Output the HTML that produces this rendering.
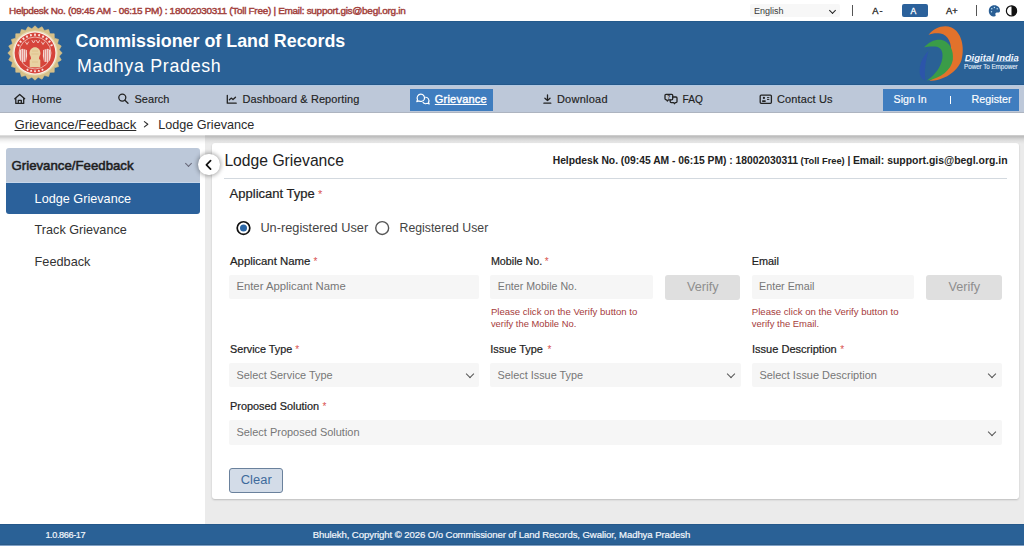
<!DOCTYPE html>
<html lang="en">
<head>
<meta charset="utf-8">
<title>Lodge Grievance - Commissioner of Land Records, Madhya Pradesh</title>
<style>
html,body{margin:0;padding:0;}
body{width:1024px;height:546px;overflow:hidden;position:relative;background:#ebebeb;font-family:"Liberation Sans",sans-serif;}
.a{position:absolute;box-sizing:border-box;}
.t{position:absolute;z-index:5;white-space:nowrap;line-height:1;font-family:"Liberation Sans",sans-serif;}
#topbar{left:0;top:0;width:1024px;height:21px;background:#fff;}
#header{left:0;top:21px;width:1024px;height:64px;background:#2a6196;border-top:1px solid #245a8c;border-bottom:1px solid #24588a;}
#nav{left:0;top:85px;width:1024px;height:28px;background:#bdc8d9;border-top:1px solid #b3c9e3;border-bottom:1px solid #adb4c0;}
#crumb{left:0;top:113px;width:1024px;height:22px;background:#fff;z-index:2;}
#side{left:0;top:135px;width:205px;height:389px;background:#fff;}
#card{left:212px;top:143px;width:807px;height:356px;background:#fff;border-radius:3px;box-shadow:0 1px 2px rgba(0,0,0,.2);}
#footer{left:0;top:524px;width:1024px;height:21px;background:#2a6196;border-top:1px solid #25588a;border-bottom:1px solid #2a5a88;}
#footline{left:0;top:545px;width:1024px;height:1px;background:#80a2c8;}
.inp{background:#f6f6f6;border-radius:2px;}
.btnv{background:#dfdfdf;border-radius:3px;}
.sep{width:1px;background:#555;}
.chev{width:6px;height:6px;border-right:1.3px solid #555;border-bottom:1.3px solid #555;transform:rotate(45deg);}
</style>
</head>
<body>
<div id="topbar" class="a"></div>
<div id="header" class="a"></div>
<div id="nav" class="a"></div>
<div id="crumb" class="a"></div>
<div id="side" class="a"></div>
<div id="card" class="a"></div>
<div id="footer" class="a"></div>
<div id="footline" class="a"></div>

<!-- top bar controls -->
<div class="a" style="left:750px;top:4px;width:90px;height:13px;background:#f7f7f7;border-radius:2px;"></div>
<div class="a chev" style="left:829.5px;top:8px;width:5px;height:5px;border-color:#222;"></div>
<div class="a sep" style="left:852px;top:5px;height:11px;"></div>
<div class="a" style="left:902px;top:4px;width:26px;height:12.5px;background:#2b619b;border-radius:2px;"></div>
<div class="a sep" style="left:976px;top:5px;height:11px;"></div>

<!-- nav buttons -->
<div class="a" style="left:410px;top:89px;width:83px;height:21.5px;background:#3f7dbf;"></div>
<div class="a" style="left:883px;top:89px;width:135.5px;height:21.5px;background:#3f7dbf;"></div>

<!-- sidebar -->
<div class="a" style="left:6px;top:148px;width:193.5px;height:35px;background:#bcc8d9;border-radius:3px 3px 0 0;"></div>
<div class="a" style="left:6px;top:182px;width:193.5px;height:1px;background:#c6d6ea;"></div>
<div class="a" style="left:6px;top:183px;width:193.5px;height:30.6px;background:#2b619b;border-radius:0 0 3px 3px;"></div>
<div class="a chev" style="left:186px;top:161px;width:5px;height:5px;border-color:#667;border-width:0 1px 1px 0;"></div>
<div class="a" style="left:198px;top:153.5px;width:21.6px;height:21.6px;border-radius:50%;background:#fff;box-shadow:0 0 4px 1px rgba(0,0,0,.33);z-index:3;"></div>

<!-- card -->
<div class="a" style="left:224px;top:178px;width:783px;height:1px;background:#d3d9df;"></div>

<!-- radios -->
<svg class="a" style="left:230px;top:215px;" width="160" height="26" viewBox="230 215 160 26">
<circle cx="243.5" cy="228.05" r="6.3" fill="#fff" stroke="#111" stroke-width="1.7"/>
<circle cx="243.5" cy="228.05" r="3.5" fill="#2a66a6"/>
<circle cx="382.2" cy="228.05" r="6.45" fill="#fff" stroke="#555" stroke-width="1.4"/>
</svg>
<!-- inputs -->
<div class="a inp" style="left:229px;top:274.6px;width:250px;height:24.6px;"></div>
<div class="a inp" style="left:490.4px;top:274.6px;width:162.4px;height:24.6px;"></div>
<div class="a btnv" style="left:664.6px;top:274.6px;width:75.7px;height:25px;"></div>
<div class="a inp" style="left:751.8px;top:274.6px;width:162.4px;height:24.6px;"></div>
<div class="a btnv" style="left:926px;top:274.6px;width:75.7px;height:25px;"></div>

<div class="a inp" style="left:229px;top:362.9px;width:250px;height:24.6px;"></div>
<div class="a inp" style="left:490.4px;top:362.9px;width:250.5px;height:24.6px;"></div>
<div class="a inp" style="left:751.8px;top:362.9px;width:250px;height:24.6px;"></div>
<div class="a inp" style="left:229px;top:420.3px;width:773px;height:24.6px;"></div>
<div class="a chev" style="left:467px;top:371.3px;"></div>
<div class="a chev" style="left:728px;top:371.3px;"></div>
<div class="a chev" style="left:989px;top:371.3px;"></div>
<div class="a chev" style="left:989px;top:428.8px;"></div>

<div class="a" style="left:229.4px;top:467.6px;width:53.2px;height:25.4px;background:#d3dce8;border:1px solid #6a819c;border-radius:3px;"></div>


<!-- emblem -->
<svg class="a" style="left:5px;top:23px;" width="60" height="60" viewBox="0 0 60 60">
<polygon points="30.00,2.80 33.18,5.81 37.04,3.73 39.34,7.46 43.60,6.44 44.85,10.64 49.23,10.77 49.36,15.15 53.56,16.40 52.54,20.66 56.27,22.96 54.19,26.82 57.20,30.00 54.19,33.18 56.27,37.04 52.54,39.34 53.56,43.60 49.36,44.85 49.23,49.23 44.85,49.36 43.60,53.56 39.34,52.54 37.04,56.27 33.18,54.19 30.00,57.20 26.82,54.19 22.96,56.27 20.66,52.54 16.40,53.56 15.15,49.36 10.77,49.23 10.64,44.85 6.44,43.60 7.46,39.34 3.73,37.04 5.81,33.18 2.80,30.00 5.81,26.82 3.73,22.96 7.46,20.66 6.44,16.40 10.64,15.15 10.77,10.77 15.15,10.64 16.40,6.44 20.66,7.46 22.96,3.73 26.82,5.81" fill="#d7c088" stroke="#d7c088" stroke-width="0.6" stroke-linejoin="round"/>
<circle cx="30" cy="30" r="22.6" fill="#e8d9b4"/>
<circle cx="30" cy="30" r="21.4" fill="#fcf4ea"/>
<circle cx="30" cy="30" r="20.4" fill="#d6443b"/>
<rect x="12.51" y="21.17" width="1.8" height="2.2" fill="#fbe3df" transform="rotate(-65 13.41 22.27)"/><rect x="14.68" y="17.63" width="1.8" height="2.2" fill="#fbe3df" transform="rotate(-52 15.58 18.73)"/><rect x="17.58" y="14.68" width="1.8" height="2.2" fill="#fbe3df" transform="rotate(-39 18.48 15.78)"/><rect x="21.08" y="12.45" width="1.8" height="2.2" fill="#fbe3df" transform="rotate(-26 21.98 13.55)"/><rect x="24.98" y="11.07" width="1.8" height="2.2" fill="#fbe3df" transform="rotate(-13 25.88 12.17)"/><rect x="29.10" y="10.60" width="1.8" height="2.2" fill="#fbe3df" transform="rotate(0 30.00 11.70)"/><rect x="33.22" y="11.07" width="1.8" height="2.2" fill="#fbe3df" transform="rotate(13 34.12 12.17)"/><rect x="37.12" y="12.45" width="1.8" height="2.2" fill="#fbe3df" transform="rotate(26 38.02 13.55)"/><rect x="40.62" y="14.68" width="1.8" height="2.2" fill="#fbe3df" transform="rotate(39 41.52 15.78)"/><rect x="43.52" y="17.63" width="1.8" height="2.2" fill="#fbe3df" transform="rotate(52 44.42 18.73)"/><rect x="45.69" y="21.17" width="1.8" height="2.2" fill="#fbe3df" transform="rotate(65 46.59 22.27)"/><rect x="36.54" y="45.82" width="1.8" height="1.8" fill="#fbe3df" transform="rotate(24 37.44 46.72)"/><rect x="32.90" y="47.00" width="1.8" height="1.8" fill="#fbe3df" transform="rotate(12 33.80 47.90)"/><rect x="29.10" y="47.40" width="1.8" height="1.8" fill="#fbe3df" transform="rotate(0 30.00 48.30)"/><rect x="25.30" y="47.00" width="1.8" height="1.8" fill="#fbe3df" transform="rotate(-12 26.20 47.90)"/><rect x="21.66" y="45.82" width="1.8" height="1.8" fill="#fbe3df" transform="rotate(-24 22.56 46.72)"/>
<circle cx="30" cy="30" r="16.0" fill="none" stroke="#f7ddd9" stroke-width="0.7"/>
<path d="M24.5 31 C24.5 26.5 27 24.3 30 24.3 C33 24.3 35.5 26.5 35.5 31 L34.2 34 L34 36 L35.3 37 L35.3 44.3 L24.7 44.3 L24.7 37 L26 36 L25.8 34 Z" fill="#e8d2a2"/>
<path d="M27 28 L33 28 M26.5 31 L33.5 31 M27 39 L33 39" stroke="#d9b982" stroke-width="0.6"/>
<path d="M14.6 27 L17.5 25.8 L21.8 27 L22.1 33 L21 38.5 L17.8 39.2 L15.3 37.5 L14.4 32 Z" fill="#f5dcd8"/>
<path d="M45.4 27 L42.5 25.8 L38.2 27 L37.9 33 L39 38.5 L42.2 39.2 L44.7 37.5 L45.6 32 Z" fill="#f5dcd8"/>
<path d="M16.6 26.5 L16.6 38.5 M18.6 26 L18.6 39 M20.5 26.5 L20.5 38.5 M43.4 26.5 L43.4 38.5 M41.4 26 L41.4 39 M39.5 26.5 L39.5 38.5" stroke="#d6443b" stroke-width="0.55"/>
<path d="M20.5 19 L22 21.5 L23.5 19 M27 17.5 L28.5 20 L30 17.5 M31.5 17.5 L33 20 L34.5 17.5 M36.5 19 L38 21.5 L39.5 19" stroke="#f3cfc9" stroke-width="0.9" fill="none" stroke-linecap="round"/>
</svg>
<!-- digital india -->
<svg class="a" style="left:0;top:0;" width="1024" height="90" viewBox="0 0 1024 90">
<path d="M928.5 35 C934 27.5 944 24.5 951.5 27.5 C961.5 32 965 47 961.5 60 C957.5 72 944 80.5 929.3 81 C939.5 75 948 65 950.5 54 C952.5 43 948 35 940.5 33.5 C935.5 32.8 931.5 33.5 928.5 35 Z" fill="#e2722b"/>
<path d="M924 47.6 C929 41.5 936 39 942 40 C950 42 954 51 952.8 60 C951 70 941 78.5 927 80.5 C935 75 941 67 942.3 58.5 C943.5 51 940.5 47 935 46.6 C931 46.3 927 46.6 924 47.6 Z" fill="#3a9c48"/>
<path d="M928.5 51 C923.5 55.5 919.8 63 919.6 70.5 C919.4 75.5 921.5 79 925.5 80.2 C924 71.5 925.5 60 928.5 51 Z" fill="#2c55aa"/>
</svg>
<!-- top icons -->
<svg class="a" style="left:984px;top:2px;" width="38" height="18" viewBox="0 0 38 18">
<path d="M10.4 3.3 C6.8 3.3 4.8 6 4.8 8.9 C4.8 12.2 7.2 14.5 10.2 14.5 C11.5 14.5 12 13.8 11.5 12.8 C11 11.8 11.6 10.6 12.8 10.6 L14.2 10.6 C15.4 10.6 16 9.8 16 8.7 C16 5.6 13.6 3.3 10.4 3.3 Z" fill="#2b5f95"/>
<circle cx="7.5" cy="9.8" r=".7" fill="#bfe3f5"/><circle cx="7.8" cy="6.8" r=".7" fill="#bfe3f5"/><circle cx="10.4" cy="5.5" r=".7" fill="#bfe3f5"/><circle cx="13.2" cy="6.8" r=".7" fill="#bfe3f5"/>
<circle cx="27.5" cy="8.9" r="5.1" fill="#fff" stroke="#111" stroke-width="1.2"/>
<path d="M27.5 3.8 A5.1 5.1 0 0 1 27.5 14 Z" fill="#111"/>
</svg>
<!-- nav icons -->
<svg class="a" style="left:0;top:85px;z-index:6;" width="1024" height="28" viewBox="0 85 1024 28">
<g fill="none" stroke="#222" stroke-width="1.3" stroke-linejoin="round" stroke-linecap="round">
<path d="M14.8 98.7 L19.7 94.4 L24.7 98.7 M15.8 97.9 L15.8 103.4 L23.7 103.4 L23.7 97.9 M18.3 103.4 L18.3 100.3 L21.3 100.3 L21.3 103.4"/>
<circle cx="122.3" cy="97.6" r="3.5"/>
<path d="M124.9 100.3 L128 103.3"/>
<path d="M227.3 95.3 L227.3 103.2 L236.2 103.2 M229.4 99.8 L231.2 98.1 L233 99.6 L235.5 97.3"/>
<path d="M547.5 94.9 L547.5 100.5 M544.9 98.2 L547.5 100.6 L550 98.2 M543.9 103.2 L550.8 103.2"/>
<path d="M666 94.3 L671.7 94.3 Q672.7 94.3 672.7 95.3 L672.7 98.8 Q672.7 99.8 671.7 99.8 L668.3 99.8 L667.3 101 L666.5 99.8 Q665 99.8 665 98.8 L665 95.3 Q665 94.3 666 94.3 Z"/>
<path d="M672.7 97 L676 97 Q677 97 677 98 L677 101.6 Q677 102.6 676 102.6 L675.3 102.6 L674.5 103.7 L673.6 102.6 L671.2 102.6 Q670.2 102.6 670.2 101.6 L670.2 99.8"/>
<rect x="760.2" y="95.1" width="11.2" height="8.2" rx="1"/>
</g>
<path d="M867.6 96.3" />
<g fill="#222"><circle cx="763.9" cy="97.9" r="1.1"/><rect x="762" y="100.3" width="3.8" height="1.7" rx=".8"/><rect x="767" y="97.2" width="2.3" height="0.9"/><rect x="767" y="99.1" width="2.3" height="0.9"/></g>
<text x="667.3" y="98.8" font-size="5" font-family="Liberation Sans" font-weight="700" fill="#222">?</text>
<g fill="none" stroke="#fff" stroke-width="1.15" stroke-linejoin="round">
<path d="M424.2 99.4 A3.7 3.7 0 1 0 417.5 99.5 L416.8 101.6 L419 100.9 A3.7 3.7 0 0 0 424.2 99.4"/>
<path d="M425.2 97.3 A3.3 3.3 0 0 1 428.5 102.2 L429.2 103.9 L427.3 103.3 A3.3 3.3 0 0 1 422.8 101.9"/>
</g>
</svg>

<div class="a" style="left:0;top:135px;width:1024px;height:9px;background:linear-gradient(rgba(0,0,0,.10),rgba(0,0,0,.2) 18%,rgba(0,0,0,.09) 45%,rgba(0,0,0,.03) 75%,rgba(0,0,0,0));z-index:2;"></div>
<div class="a" style="left:965px;top:61px;width:53px;height:0.8px;background:rgba(207,224,243,.45);"></div>
<svg class="a" style="left:198px;top:153.8px;z-index:4;" width="22" height="22" viewBox="0 0 22 22"><path d="M12.6 6.6 L8.4 10.9 L12.6 15.2" fill="none" stroke="#111" stroke-width="1.7" stroke-linecap="round" stroke-linejoin="round"/></svg>
<div class="a" style="left:950px;top:95.5px;width:1.2px;height:8px;background:#fff;z-index:6;"></div>
<svg class="a" style="left:140px;top:118px;z-index:6;" width="12" height="12" viewBox="140 118 12 12"><path d="M144.4 121.6 L147.8 124.25 L144.4 126.9" fill="none" stroke="#333" stroke-width="1.2" stroke-linecap="round" stroke-linejoin="round"/></svg>
<span class="t" style="left:9.0px;top:5.80px;font-size:9.98px;font-weight:400;color:#a3423d;letter-spacing:-0.286px;-webkit-text-stroke:0.45px;">Helpdesk No. (09:45 AM - 06:15 PM) : 18002030311 (Toll Free) | Email: support.gis@begl.org.in</span>
<span class="t" style="left:754.0px;top:7.00px;font-size:9.02px;font-weight:400;color:#3a3a3a;letter-spacing:-0.006px;">English</span>
<span class="t" style="left:872.3px;top:6.51px;font-size:9.30px;font-weight:400;color:#222;letter-spacing:0.961px;-webkit-text-stroke:0.3px;">A-</span>
<span class="t" style="left:910.5px;top:6.80px;font-size:8.60px;font-weight:400;color:#fff;letter-spacing:0.000px;-webkit-text-stroke:0.3px;">A</span>
<span class="t" style="left:946.0px;top:6.51px;font-size:9.30px;font-weight:400;color:#222;letter-spacing:0.117px;-webkit-text-stroke:0.3px;">A+</span>
<span class="t" style="left:75.5px;top:32.71px;font-size:17.87px;font-weight:700;color:#fff;letter-spacing:-0.006px;">Commissioner of Land Records</span>
<span class="t" style="left:77.0px;top:58.00px;font-size:17.82px;font-weight:400;color:#fff;letter-spacing:0.700px;">Madhya Pradesh</span>
<span class="t" style="left:964.7px;top:52.61px;font-size:9.54px;font-weight:700;color:#f0f6ff;letter-spacing:0.005px;font-style:italic;">Digital India</span>
<span class="t" style="left:964.1px;top:63.80px;font-size:6.30px;font-weight:400;color:#e3edf9;letter-spacing:-0.060px;-webkit-text-stroke:0.1px;">Power To Empower</span>
<span class="t" style="left:31.7px;top:93.90px;font-size:10.98px;font-weight:400;color:#222;letter-spacing:0.231px;-webkit-text-stroke:0.15px;">Home</span>
<span class="t" style="left:134.5px;top:93.90px;font-size:10.98px;font-weight:400;color:#222;letter-spacing:0.039px;-webkit-text-stroke:0.15px;">Search</span>
<span class="t" style="left:242.6px;top:93.90px;font-size:10.98px;font-weight:400;color:#222;letter-spacing:0.101px;-webkit-text-stroke:0.15px;">Dashboard &amp; Reporting</span>
<span class="t" style="left:434.8px;top:93.90px;font-size:10.98px;font-weight:400;color:#fff;letter-spacing:0.232px;text-decoration:underline;-webkit-text-stroke:0.4px;">Grievance</span>
<span class="t" style="left:556.9px;top:93.90px;font-size:10.98px;font-weight:400;color:#222;letter-spacing:0.268px;-webkit-text-stroke:0.15px;">Download</span>
<span class="t" style="left:682.5px;top:94.91px;font-size:10.15px;font-weight:400;color:#222;letter-spacing:0.022px;-webkit-text-stroke:0.15px;">FAQ</span>
<span class="t" style="left:776.9px;top:93.90px;font-size:10.98px;font-weight:400;color:#222;letter-spacing:0.155px;-webkit-text-stroke:0.15px;">Contact Us</span>
<span class="t" style="left:893.6px;top:94.20px;font-size:10.61px;font-weight:400;color:#fff;letter-spacing:0.001px;-webkit-text-stroke:0.15px;">Sign In</span>
<span class="t" style="left:971.6px;top:94.21px;font-size:10.73px;font-weight:400;color:#fff;letter-spacing:0.003px;-webkit-text-stroke:0.15px;">Register</span>
<span class="t" style="left:14.5px;top:118.21px;font-size:13.20px;font-weight:400;color:#2a2a2a;letter-spacing:0.006px;text-decoration:underline;">Grievance/Feedback</span>
<span class="t" style="left:158.2px;top:119.21px;font-size:12.63px;font-weight:400;color:#2a2a2a;letter-spacing:0.000px;">Lodge Grievance</span>
<span class="t" style="left:11.5px;top:158.50px;font-size:13.23px;font-weight:400;color:#1e1e1e;letter-spacing:0.006px;-webkit-text-stroke:0.55px;">Grievance/Feedback</span>
<span class="t" style="left:34.6px;top:192.80px;font-size:12.67px;font-weight:400;color:#fff;letter-spacing:0.004px;">Lodge Grievance</span>
<span class="t" style="left:34.6px;top:224.11px;font-size:12.63px;font-weight:400;color:#333;letter-spacing:0.000px;">Track Grievance</span>
<span class="t" style="left:34.6px;top:255.61px;font-size:12.72px;font-weight:400;color:#333;letter-spacing:0.001px;">Feedback</span>
<span class="t" style="left:224.4px;top:153.12px;font-size:15.69px;font-weight:400;color:#222;letter-spacing:0.004px;">Lodge Grievance</span>
<span class="t" style="left:552.7px;top:156.01px;font-size:10.32px;font-weight:700;color:#222;letter-spacing:-0.002px;">Helpdesk No. (09:45 AM - 06:15 PM) : 18002030311</span>
<span class="t" style="left:800.5px;top:157.01px;font-size:9.27px;font-weight:700;color:#222;letter-spacing:0.005px;">(Toll Free)</span>
<span class="t" style="left:847.6px;top:156.01px;font-size:10.20px;font-weight:700;color:#222;letter-spacing:0.000px;">|</span>
<span class="t" style="left:852.9px;top:156.01px;font-size:10.45px;font-weight:700;color:#222;letter-spacing:0.002px;">Email: support.gis@begl.org.in</span>
<span class="t" style="left:229.6px;top:187.31px;font-size:13.02px;font-weight:400;color:#222;letter-spacing:0.002px;-webkit-text-stroke:0.2px;">Applicant Type</span>
<span class="t" style="left:318.0px;top:189.30px;font-size:11.00px;font-weight:400;color:#d9534f;letter-spacing:0.000px;">*</span>
<span class="t" style="left:260.4px;top:222.30px;font-size:12.76px;font-weight:400;color:#444;letter-spacing:0.004px;">Un-registered User</span>
<span class="t" style="left:399.6px;top:222.31px;font-size:12.27px;font-weight:400;color:#444;letter-spacing:0.001px;">Registered User</span>
<span class="t" style="left:230.0px;top:256.01px;font-size:11.40px;font-weight:400;color:#222;letter-spacing:-0.003px;-webkit-text-stroke:0.2px;">Applicant Name</span>
<span class="t" style="left:313.5px;top:257.00px;font-size:10.00px;font-weight:400;color:#d9534f;letter-spacing:0.000px;">*</span>
<span class="t" style="left:490.9px;top:256.01px;font-size:10.73px;font-weight:400;color:#222;letter-spacing:0.001px;-webkit-text-stroke:0.2px;">Mobile No.</span>
<span class="t" style="left:544.8px;top:257.00px;font-size:10.00px;font-weight:400;color:#d9534f;letter-spacing:0.000px;">*</span>
<span class="t" style="left:751.8px;top:256.00px;font-size:10.87px;font-weight:400;color:#222;letter-spacing:-0.001px;-webkit-text-stroke:0.2px;">Email</span>
<span class="t" style="left:236.4px;top:281.21px;font-size:11.30px;font-weight:400;color:#777;letter-spacing:0.001px;">Enter Applicant Name</span>
<span class="t" style="left:497.8px;top:281.20px;font-size:10.62px;font-weight:400;color:#777;letter-spacing:0.007px;">Enter Mobile No.</span>
<span class="t" style="left:687.0px;top:281.00px;font-size:12.66px;font-weight:400;color:#8e8e8e;letter-spacing:0.001px;">Verify</span>
<span class="t" style="left:759.1px;top:281.21px;font-size:10.71px;font-weight:400;color:#777;letter-spacing:0.001px;">Enter Email</span>
<span class="t" style="left:948.4px;top:281.00px;font-size:12.66px;font-weight:400;color:#8e8e8e;letter-spacing:0.001px;">Verify</span>
<span class="t" style="left:490.9px;top:306.80px;font-size:9.58px;font-weight:400;color:#a63c3c;letter-spacing:-0.001px;">Please click on the Verify button to</span>
<span class="t" style="left:490.9px;top:320.11px;font-size:9.37px;font-weight:400;color:#a63c3c;letter-spacing:0.002px;">verify the Mobile No.</span>
<span class="t" style="left:751.8px;top:306.81px;font-size:9.61px;font-weight:400;color:#a63c3c;letter-spacing:0.003px;">Please click on the Verify button to</span>
<span class="t" style="left:751.8px;top:319.11px;font-size:9.46px;font-weight:400;color:#a63c3c;letter-spacing:0.001px;">verify the Email.</span>
<span class="t" style="left:230.0px;top:344.31px;font-size:10.81px;font-weight:400;color:#222;letter-spacing:0.003px;-webkit-text-stroke:0.2px;">Service Type</span>
<span class="t" style="left:295.2px;top:345.31px;font-size:10.00px;font-weight:400;color:#d9534f;letter-spacing:0.000px;">*</span>
<span class="t" style="left:490.3px;top:344.31px;font-size:10.94px;font-weight:400;color:#222;letter-spacing:-0.005px;-webkit-text-stroke:0.2px;">Issue Type</span>
<span class="t" style="left:547.5px;top:345.31px;font-size:10.00px;font-weight:400;color:#d9534f;letter-spacing:0.000px;">*</span>
<span class="t" style="left:752.0px;top:344.31px;font-size:11.05px;font-weight:400;color:#222;letter-spacing:-0.004px;-webkit-text-stroke:0.2px;">Issue Description</span>
<span class="t" style="left:840.2px;top:345.31px;font-size:10.00px;font-weight:400;color:#d9534f;letter-spacing:0.000px;">*</span>
<span class="t" style="left:236.4px;top:369.81px;font-size:10.91px;font-weight:400;color:#777;letter-spacing:0.004px;">Select Service Type</span>
<span class="t" style="left:497.5px;top:369.81px;font-size:10.86px;font-weight:400;color:#777;letter-spacing:0.001px;">Select Issue Type</span>
<span class="t" style="left:759.4px;top:369.82px;font-size:10.95px;font-weight:400;color:#777;letter-spacing:0.006px;">Select Issue Description</span>
<span class="t" style="left:230.0px;top:401.20px;font-size:10.91px;font-weight:400;color:#222;letter-spacing:-0.005px;-webkit-text-stroke:0.2px;">Proposed Solution</span>
<span class="t" style="left:322.5px;top:402.20px;font-size:10.00px;font-weight:400;color:#d9534f;letter-spacing:0.000px;">*</span>
<span class="t" style="left:236.4px;top:426.60px;font-size:10.97px;font-weight:400;color:#777;letter-spacing:-0.001px;">Select Proposed Solution</span>
<span class="t" style="left:240.7px;top:474.40px;font-size:12.88px;font-weight:400;color:#3d6a9c;letter-spacing:0.098px;">Clear</span>
<span class="t" style="left:45.4px;top:530.91px;font-size:9.12px;font-weight:400;color:#f3f7fc;letter-spacing:-0.379px;-webkit-text-stroke:0.2px;">1.0.866-17</span>
<span class="t" style="left:312.7px;top:530.01px;font-size:9.59px;font-weight:400;color:#f3f7fc;letter-spacing:-0.084px;-webkit-text-stroke:0.2px;">Bhulekh, Copyright &copy; 2026 O/o Commissioner of Land Records, Gwalior, Madhya Pradesh</span>
</body>
</html>
